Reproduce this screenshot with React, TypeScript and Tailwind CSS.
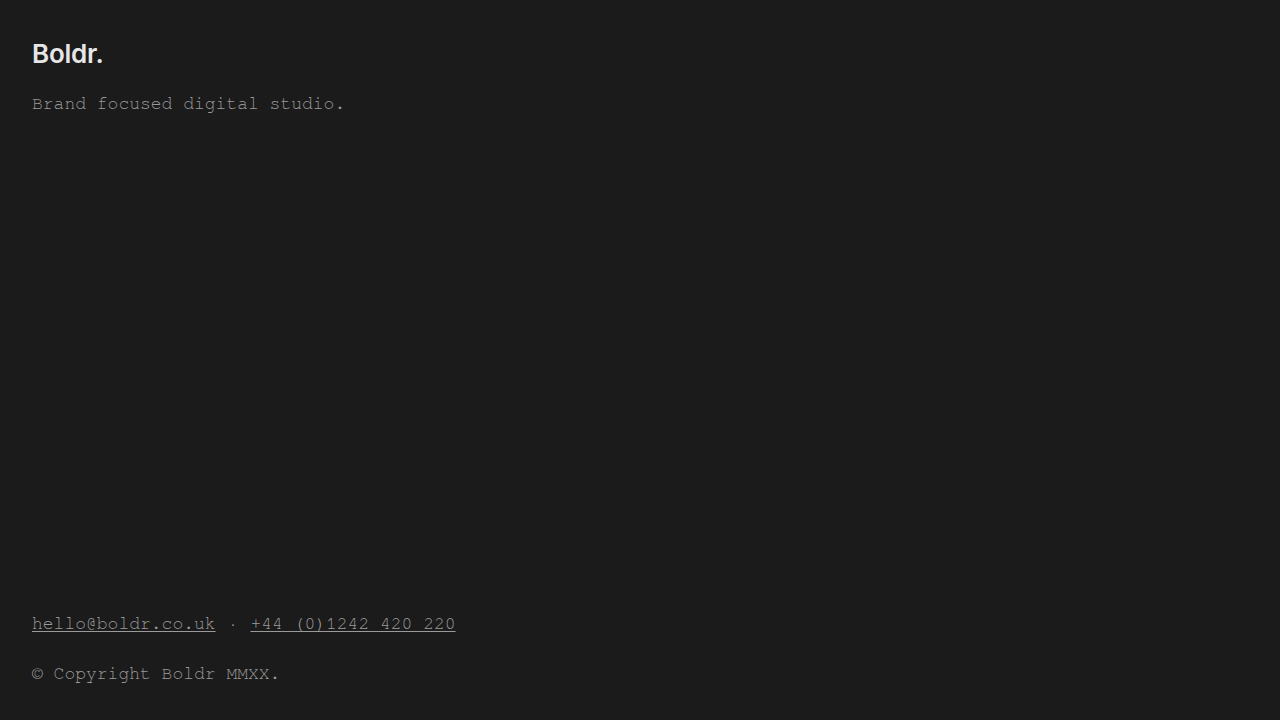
export default function App() {
  const mono = {
    fontFamily: '"Nimbus Mono PS", "Nimbus Mono L", FreeMono, Courier, "Courier New", "Liberation Mono", monospace',
  };
  return (
    <div className="flex h-screen w-full flex-col justify-between bg-[#1b1b1b] px-8 pt-[38px] pb-[32px] text-[#9a9a9a]">
      <header>
        <h1
          className="text-[26px] leading-8 font-semibold tracking-[-0.01em] text-[#e6e6e6]"
          style={{ fontFamily: 'Inter, "Liberation Sans", sans-serif' }}
        >
          Boldr.
        </h1>
        <p className="mt-5 text-[18px] leading-7" style={mono}>
          Brand focused digital studio.
        </p>
      </header>
      <footer className="text-[18px] leading-7" style={mono}>
        <p>
          <a href="#" className="underline underline-offset-2">hello@boldr.co.uk</a>
          <span className="mx-3">·</span>
          <a href="#" className="underline underline-offset-2">+44 (0)1242 420 220</a>
        </p>
        <p className="mt-[22px]">© Copyright Boldr MMXX.</p>
      </footer>
    </div>
  );
}
